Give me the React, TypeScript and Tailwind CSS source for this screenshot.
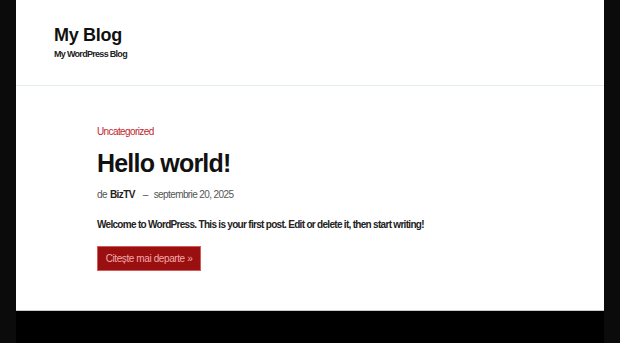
export default function App() {
  return (
    <div className="h-[343px] overflow-hidden bg-[#0b0b0b] px-[16px] font-['Liberation_Sans',Arial,sans-serif]">
      <div className="bg-white">
        {/* site header */}
        <header className="h-[86px] border-b border-[#e4eeed] pl-[38px] pt-[24px]">
          <h1 className="text-[18px] font-bold leading-[22px] tracking-[-0.3px] text-[#111]">
            My Blog
          </h1>
          <p className="mt-[2px] text-[9px] font-bold leading-[12px] tracking-[-0.7px] text-[#222]">
            My WordPress Blog
          </p>
        </header>

        <main className="border-b border-[#c9c9c9] pb-[39px] pl-[81px] pt-[40px]">
          <a className="block text-[10px] leading-[12px] tracking-[-0.6px] text-[#c0272d]">
            Uncategorized
          </a>
          <h2 className="mt-[10px] text-[25px] font-bold leading-[30px] tracking-[-0.8px] text-[#111]">
            Hello world!
          </h2>
          <div className="mt-[11px] flex items-center text-[10px] leading-[12px] tracking-[-0.6px] text-[#555]">
            <span>de</span>
            <span className="ml-[3px] font-bold text-[#222]">BizTV</span>
            <span className="ml-[8px]">–</span>
            <span className="ml-[6px]">septembrie 20, 2025</span>
          </div>
          <p className="mt-[18px] text-[10px] font-bold leading-[12px] tracking-[-0.7px] text-[#222]">
            Welcome to WordPress. This is your first post. Edit or delete it, then start writing!
          </p>
          <a className="mt-[15px] flex h-[25px] w-[104px] items-center justify-center border border-[#d45a5a] bg-[#9a1010] text-[10px] tracking-[-0.4px] text-[#f2a9a9]">
            Citește mai departe »
          </a>
        </main>
      </div>
      <div className="h-[60px] bg-black" />
    </div>
  );
}
